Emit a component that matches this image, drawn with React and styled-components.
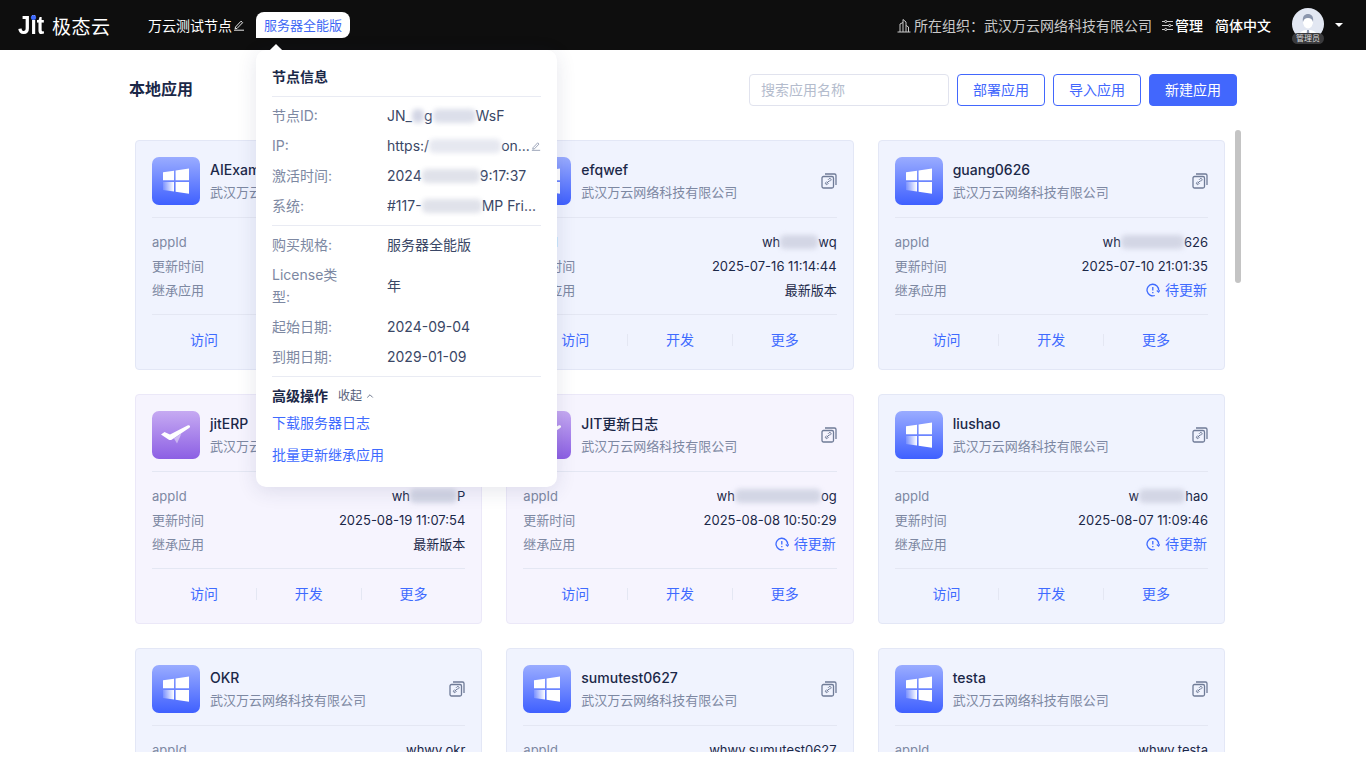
import React from 'react';
import styled, { createGlobalStyle } from 'styled-components';
import { ChevronUp } from 'lucide-react';

const GlobalStyle = createGlobalStyle`
html, body {
    margin: 0;
    height: 100%;
    overflow: hidden;
    background: #fff;
}
* {
    box-sizing: border-box;
}
body {
    font-family: Inter, "Noto Sans CJK SC", sans-serif;
    font-size: 14px;
    color: #1b2848;
}
`;

const Page = styled.div`
height: 768px;
display: flex;
flex-direction: column;
`;

const Header = styled.header`
height: 50px;
flex: none;
background: #0e0e0e;
color: #fff;
display: flex;
align-items: center;
padding: 0 23px 0 18px;
position: relative;
z-index: 5;
`;

const Logo = styled.div`
display: flex;
align-items: center;
width: 130px;
font-weight: 500;
`;

const LogoMark = styled.span`
position: relative;
font-family: "Liberation Sans", sans-serif;
font-size: 26px;
font-weight: 700;
width: 34px;
transform: scaleX(0.86);
transform-origin: left center;
&::after {
    content: '';
    position: absolute;
    left: 15px;
    top: 5px;
    width: 6px;
    height: 5px;
    border-radius: 50%;
    background: #3f6bff;
}
`;

const LogoName = styled.span`
font-size: 19px;
letter-spacing: 0.5px;
font-weight: 400;
`;

const NodeName = styled.div`
display: flex;
align-items: center;
gap: 1px;
width: 108px;
`;

const TabWrap = styled.div`
position: relative;
`;

const Tab = styled.div`
height: 26px;
padding: 0 8px;
line-height: 26px;
font-size: 13px;
color: #4068f5;
background: #fff;
border-radius: 8px 8px 8px 0;
`;

const Popover = styled.div`
position: absolute;
left: 0;
top: 38px;
width: 301px;
padding: 16px 16px 21px;
background: #fff;
border-radius: 10px;
color: #3a4766;
box-shadow: 0 4px 20px rgba(40, 50, 100, 0.12);
&::before {
    content: '';
    position: absolute;
    left: 15px;
    top: -4px;
    width: 10px;
    height: 10px;
    background: #fff;
    transform: rotate(45deg);
}
`;

const PopTitle = styled.div`
font-weight: 600;
line-height: 22px;
padding-bottom: 8px;
margin-bottom: 4px;
color: #1b2848;
border-bottom: 1px solid #e9ebf3;
`;

const Divider = styled.div`
height: 1px;
margin: 4px 0;
background: #e9ebf3;
`;

const InfoRow = styled.div`
display: flex;
align-items: center;
padding: 4px 0;
line-height: 22px;
`;

const InfoLabel = styled.div`
width: 115px;
flex: none;
padding-right: 45px;
color: #7d88a2;
`;

const InfoValue = styled.div`
flex: 1;
min-width: 0;
white-space: nowrap;
overflow: hidden;
text-overflow: ellipsis;
`;

const Blur = styled.span`
display: inline-block;
width: ${p => p.$w}px;
height: 14px;
vertical-align: -2px;
border-radius: 5px;
background: ${p => p.$color || '#d3d6e5'};
filter: blur(2.5px);
`;

const AdvancedHead = styled.div`
display: flex;
align-items: center;
gap: 10px;
margin-top: 8px;
line-height: 22px;
font-weight: 600;
color: #1b2848;
`;

const Collapse = styled.span`
display: inline-flex;
align-items: center;
gap: 3px;
font-size: 12px;
font-weight: 400;
color: #55607a;
`;

const PopLink = styled.div`
color: #3f6bff;
line-height: 22px;
margin-top: ${p => p.$top}px;
`;

const HeaderRight = styled.div`
margin-left: auto;
display: flex;
align-items: center;
`;

const Org = styled.div`
display: flex;
align-items: center;
gap: 3px;
color: #c9c9c9;
margin-right: 10px;
`;

const Manage = styled.div`
display: flex;
align-items: center;
gap: 2px;
font-weight: 500;
margin-right: 12px;
`;

const Lang = styled.div`
font-weight: 500;
margin-right: 21px;
`;

const Avatar = styled.div`
width: 32px;
height: 32px;
border-radius: 50%;
background: #e2e7f2;
position: relative;
margin-top: -2px;
`;

const AvatarBadge = styled.span`
position: absolute;
left: 0;
right: 0;
bottom: -4px;
height: 11px;
line-height: 11px;
border-radius: 6px;
background: #3a3a3c;
color: #ddd;
font-size: 8px;
text-align: center;
`;

const Caret = styled.span`
width: 0;
height: 0;
margin-left: 11px;
border-left: 4px solid transparent;
border-right: 4px solid transparent;
border-top: 4px solid #fff;
`;

const Main = styled.main`
height: 702px;
flex: none;
overflow: hidden;
position: relative;
padding: 24px 129px 0;
`;

const ScrollThumb = styled.div`
position: absolute;
left: 1235px;
top: 80px;
width: 6px;
height: 153px;
border-radius: 3px;
background: #c4c4c4;
`;

const TitleBar = styled.div`
display: flex;
align-items: center;
gap: 8px;
height: 32px;
margin-bottom: 34px;
`;

const PageTitle = styled.h1`
margin: 0 auto 0 0;
padding-bottom: 3px;
font-size: 16px;
line-height: 22px;
font-weight: 600;
color: #1b2848;
`;

const Search = styled.input`
width: 200px;
height: 32px;
padding: 0 11px 2px;
border: 1px solid #e1e3ee;
border-radius: 4px;
font: inherit;
outline: none;
&::placeholder {
    color: #b4bccd;
}
`;

const Button = styled.button`
width: 88px;
height: 32px;
padding: 0 0 2px;
border: 1px solid #4267fd;
border-radius: 4px;
font: inherit;
color: ${p => p.$primary ? '#fff' : '#4267fd'};
background: ${p => p.$primary ? '#4267fd' : '#fff'};
`;

const Grid = styled.div`
display: grid;
grid-template-columns: repeat(3, 1fr);
gap: 24px;
margin: 0 12px 0 6px;
`;

const Card = styled.div`
height: 230px;
padding: 16px 16px 0;
display: flex;
flex-direction: column;
border: 1px solid ${p => p.$purple ? '#ebe8f8' : '#e3e7f6'};
border-radius: 4px;
background: ${p => p.$purple ? '#f6f4fe' : '#f0f3fe'};
`;

const CardHead = styled.div`
display: flex;
align-items: center;
gap: 10px;
padding-bottom: 12px;
border-bottom: 1px solid #e4e7f3;
`;

const AppIcon = styled.div`
width: 48px;
height: 48px;
flex: none;
border-radius: 7px;
display: flex;
align-items: center;
justify-content: center;
background: ${p => p.$purple
    ? 'linear-gradient(#c6aaf2, #8c5fe4)'
    : 'linear-gradient(#9aacff, #3f60ff)'};
`;

const CardTitle = styled.div`
flex: 1;
min-width: 0;
align-self: flex-start;
padding-top: 2px;
line-height: 22px;
`;

const AppName = styled.div`
font-weight: 500;
color: #1b2848;
`;

const Company = styled.div`
font-size: 13px;
color: #7d88a2;
`;

const Meta = styled.div`
padding: 12px 0;
border-bottom: 1px solid #e4e7f3;
`;

const MetaRow = styled.div`
display: flex;
justify-content: space-between;
align-items: center;
height: 24px;
line-height: 24px;
font-size: 13px;
color: #7d88a2;
`;

const MetaValue = styled.span`
color: #1b2848;
`;

const Pending = styled.span`
display: inline-flex;
align-items: center;
gap: 5px;
margin-right: 1px;
font-size: 14px;
color: #3f6bff;
`;

const Actions = styled.div`
flex: 1;
display: flex;
align-items: center;
padding-bottom: 4px;
`;

const Action = styled.div`
flex: 1;
text-align: center;
line-height: 12px;
color: #3f6bff;
& + & {
    border-left: 1px solid #e4e7f3;
}
`;

const PenIcon = ({ size = 12, color = '#fff' }) => (
    <svg width={size} height={size} viewBox="0 0 12 12" fill="none" stroke={color} strokeWidth="0.9">
        <path d="M2.500 8 8 2.200l1.600 1.500L4.100 9.400l-2 .4z" />
        <path d="M1 11.200h10" />
    </svg>
);

const BuildingIcon = () => (
    <svg width="14" height="15" viewBox="0 0 14 15" fill="none" stroke="#c9c9c9" strokeWidth="1">
        <path d="M.5 14h13M3 14V6l3-1.500M6 14V1.500L9 4v10M9 7.500l2.500 1.500v5" />
    </svg>
);

const SlidersIcon = () => (
    <svg width="11" height="11" viewBox="0 0 11 11" fill="none" stroke="#fff" strokeWidth="0.8">
        <path d="M0 1.500h2.500M5 1.500h6M0 5.500h6.500M9 5.500h2M0 9.500h2.500M5 9.500h6" />
        <circle cx="3.700" cy="1.500" r="1.100" />
        <circle cx="7.700" cy="5.500" r="1.100" />
        <circle cx="3.700" cy="9.500" r="1.100" />
    </svg>
);

const AvatarFace = () => (
    <svg width="32" height="32" viewBox="0 0 32 32">
        <path d="M6 30c1-7 5-8 10-8s9 1 10 8z" fill="#fff" />
        <ellipse cx="16" cy="14" rx="5" ry="6.500" fill="#fff" />
        <path d="M11 14c-1-6 2-8 5-8s6 2 5 8c-1-3-2-4-5-4s-4 1-5 4z" fill="#8b96ad" />
        <path d="M15 22h2l.5 6h-3z" fill="#8b96ad" />
    </svg>
);

const WindowsIcon = () => (
    <svg width="26" height="26" viewBox="0 0 26 26">
        <defs>
            <linearGradient id="winFade" x1="0" x2="1" y1="0" y2="0">
                <stop offset="0" stopColor="#fff" stopOpacity="0.15" />
                <stop offset="1" stopColor="#fff" />
            </linearGradient>
        </defs>
        <path d="M0 4.200 11 2.700v9.600H0z" fill="#fff" />
        <path d="M12.600 2.400 26 .5v11.800H12.600z" fill="#fff" />
        <path d="M0 13.900h11v9.600L0 22z" fill="url(#winFade)" />
        <path d="M12.600 13.900H26v11.800l-13.400-1.900z" fill="#fff" />
    </svg>
);

const PlaneIcon = () => (
    <svg width="32" height="24" viewBox="0 0 32 24">
        <path d="M1 11.500 4.500 9l5.500 2.500L27.500 2.500c2-.8 3.500.8 2 2.300L12 16.500c-1.200.7-2.400.7-3.500 0z" fill="#fff" />
        <path d="M14 15.500 21.500 10.500l-4.500 10z" fill="#fff" opacity="0.45" />
    </svg>
);

const CopyLinkIcon = () => (
    <svg width="16" height="16" viewBox="0 0 16 16" fill="none" stroke="#6f7b97" strokeWidth="1.300">
        <rect x="1" y="3.500" width="11.500" height="11.500" rx="1.500" />
        <path d="M4 1h9.500A1.500 1.500 0 0 1 15 2.500V12" />
        <path d="M5.800 8.500l-1 1a1.200 1.200 0 0 0 1.700 1.700l1-1M7 6.800l1-1a1.200 1.200 0 0 1 1.700 1.700l-1 1M5.500 10.500 8.500 7.500" strokeWidth="1" />
    </svg>
);

const PendingIcon = () => (
    <svg width="14" height="14" viewBox="0 0 14 14" fill="none" stroke="#3f6bff" strokeWidth="1.300">
        <path d="M12.600 7.500A5.800 5.800 0 1 0 8.800 12.500" />
        <path d="M10.800 7.500l1.800 1.700 1.300-2" strokeWidth="1.100" />
        <path d="M6.800 4v3.400M6.800 9v1.200" />
    </svg>
);

const apps = [
    { name: 'AIExample', appId: <>whwy.aiexample</>, time: '2025-08-20 10:12:08', latest: true },
    { name: 'efqwef', appId: <>wh<Blur $w={38} />wq</>, time: '2025-07-16 11:14:44', latest: true },
    { name: 'guang0626', appId: <>wh<Blur $w={63} />626</>, time: '2025-07-10 21:01:35' },
    { name: 'jitERP', purple: true, plane: true, appId: <>wh<Blur $w={47} />P</>, time: '2025-08-19 11:07:54', latest: true },
    { name: 'JIT更新日志', purple: true, plane: true, appId: <>wh<Blur $w={86} />og</>, time: '2025-08-08 10:50:29' },
    { name: 'liushao', appId: <>w<Blur $w={46} />hao</>, time: '2025-08-07 11:09:46' },
    { name: 'OKR', appId: 'whwy.okr', time: '2025-08-06 09:30:12', latest: true },
    { name: 'sumutest0627', appId: 'whwy.sumutest0627', time: '2025-08-05 16:21:50', latest: true },
    { name: 'testa', appId: 'whwy.testa', time: '2025-08-01 14:02:17', latest: true },
];

const AppCard = ({ app }) => (
    <Card $purple={app.purple}>
        <CardHead>
            <AppIcon $purple={app.purple}>
                {app.plane ? <PlaneIcon /> : <WindowsIcon />}
            </AppIcon>
            <CardTitle>
                <AppName>{app.name}</AppName>
                <Company>武汉万云网络科技有限公司</Company>
            </CardTitle>
            <CopyLinkIcon />
        </CardHead>
        <Meta>
            <MetaRow>appId<MetaValue>{app.appId}</MetaValue></MetaRow>
            <MetaRow>更新时间<MetaValue>{app.time}</MetaValue></MetaRow>
            <MetaRow>
                继承应用
                {app.latest
                    ? <MetaValue>最新版本</MetaValue>
                    : <Pending><PendingIcon />待更新</Pending>}
            </MetaRow>
        </Meta>
        <Actions>
            <Action>访问</Action>
            <Action>开发</Action>
            <Action>更多</Action>
        </Actions>
    </Card>
);

const NodePopover = () => (
    <Popover>
        <PopTitle>节点信息</PopTitle>
        <InfoRow>
            <InfoLabel>节点ID:</InfoLabel>
            <InfoValue>JN_<Blur $w={12} />g<Blur $w={43} $color="#dcdfea" />WsF</InfoValue>
        </InfoRow>
        <InfoRow>
            <InfoLabel>IP:</InfoLabel>
            <InfoValue>https:/<Blur $w={72} $color="#e6e8f0" />on...</InfoValue>
            <PenIcon size={10} color="#7d88a2" />
        </InfoRow>
        <InfoRow>
            <InfoLabel>激活时间:</InfoLabel>
            <InfoValue>2024<Blur $w={58} $color="#e0e2ea" />9:17:37</InfoValue>
        </InfoRow>
        <InfoRow>
            <InfoLabel>系统:</InfoLabel>
            <InfoValue>#117-<Blur $w={60} $color="#e0e2ea" />MP Fri...</InfoValue>
        </InfoRow>
        <Divider />
        <InfoRow>
            <InfoLabel>购买规格:</InfoLabel>
            <InfoValue>服务器全能版</InfoValue>
        </InfoRow>
        <InfoRow>
            <InfoLabel>License类型:</InfoLabel>
            <InfoValue>年</InfoValue>
        </InfoRow>
        <InfoRow>
            <InfoLabel>起始日期:</InfoLabel>
            <InfoValue>2024-09-04</InfoValue>
        </InfoRow>
        <InfoRow>
            <InfoLabel>到期日期:</InfoLabel>
            <InfoValue>2029-01-09</InfoValue>
        </InfoRow>
        <Divider />
        <AdvancedHead>
            高级操作
            <Collapse>收起<ChevronUp size={10} /></Collapse>
        </AdvancedHead>
        <PopLink $top={5}>下载服务器日志</PopLink>
        <PopLink $top={10}>批量更新继承应用</PopLink>
    </Popover>
);

export default function App() {
    return (
        <Page>
            <GlobalStyle />
            <Header>
                <Logo>
                    <LogoMark>Jit</LogoMark>
                    <LogoName>极态云</LogoName>
                </Logo>
                <NodeName>万云测试节点<PenIcon /></NodeName>
                <TabWrap>
                    <Tab>服务器全能版</Tab>
                    <NodePopover />
                </TabWrap>
                <HeaderRight>
                    <Org><BuildingIcon />{'所在组织\uFF1A武汉万云网络科技有限公司'}</Org>
                    <Manage><SlidersIcon />管理</Manage>
                    <Lang>简体中文</Lang>
                    <Avatar>
                        <AvatarFace />
                        <AvatarBadge>管理员</AvatarBadge>
                    </Avatar>
                    <Caret />
                </HeaderRight>
            </Header>
            <Main>
                <TitleBar>
                    <PageTitle>本地应用</PageTitle>
                    <Search placeholder="搜索应用名称" />
                    <Button>部署应用</Button>
                    <Button>导入应用</Button>
                    <Button $primary>新建应用</Button>
                </TitleBar>
                <Grid>
                    {apps.map(app => <AppCard key={app.name} app={app} />)}
                </Grid>
                <ScrollThumb />
            </Main>
        </Page>
    );
}
